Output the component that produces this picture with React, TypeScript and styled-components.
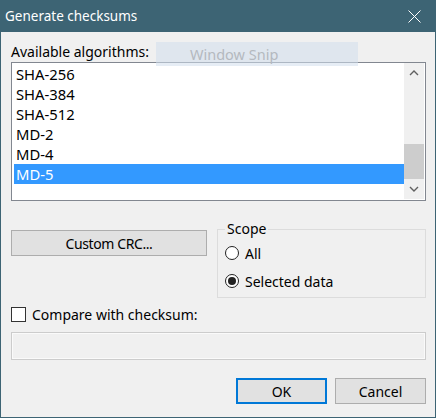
import React from "react";
import styled, { createGlobalStyle } from "styled-components";

const Global = createGlobalStyle`
  html, body { margin: 0; padding: 0; background: #f0f0f0; }
  * { box-sizing: border-box; }
`;

const FONT = `"Noto Sans", "Open Sans", sans-serif`;

const Window = styled.div`
  position: relative;
  width: 436px;
  height: 418px;
  border: 1px solid #3d6474;
  border-top: none;
  background: #f0f0f0;
  display: flex;
  flex-direction: column;
  font-family: ${FONT};
  font-size: 14px;
  color: #000;
`;

const TitleBar = styled.div`
  height: 32px;
  margin: 0 -1px;
  background: #3d6474;
  color: #fff;
  display: flex;
  align-items: center;
  justify-content: space-between;
  padding: 0 15px 0 5px;
`;

const Title = styled.span`
  font-size: 13.5px;
  line-height: 20px;
  margin-top: 0px;
`;

const Body = styled.div`
  flex: 1;
  display: flex;
  flex-direction: column;
  padding: 10px 9px 0 10px;
`;

const Label = styled.div`
  height: 20px;
  line-height: 20px;
  white-space: nowrap;
`;

const ListBox = styled.div`
  height: 139px;
  border: 1px solid #828790;
  background: #fff;
  display: flex;
  padding: 0 1px 1px 1px;
`;

const Items = styled.div`
  flex: 1;
  display: flex;
  flex-direction: column;
  padding: 1px 0 0 1px;
  font-size: 14.8px;
`;

const Item = styled.div<{ $selected?: boolean }>`
  height: 20px;
  line-height: 21px;
  padding-left: 2px;
  background: ${(p) => (p.$selected ? "#3399ff" : "transparent")};
  color: ${(p) => (p.$selected ? "#fff" : "#000")};
`;

const ScrollBar = styled.div`
  width: 20px;
  background: #f0f0f0;
  display: flex;
  flex-direction: column;
`;

const ScrollButton = styled.div`
  height: 20px;
  display: flex;
  align-items: center;
  justify-content: center;
`;

const Track = styled.div`
  flex: 1;
  display: flex;
  flex-direction: column;
  justify-content: flex-end;
`;

const Thumb = styled.div`
  height: 35px;
  background: #cdcdcd;
`;

const Row = styled.div`
  display: flex;
  align-items: flex-start;
  gap: 10px;
  margin-top: 20px;
`;

const Button = styled.button<{ $default?: boolean; $width: number }>`
  width: ${(p) => p.$width}px;
  height: 26px;
  margin: 0;
  padding: 0;
  font-family: ${FONT};
  font-size: 14px;
  color: #000;
  background: #e1e1e1;
  border: ${(p) => (p.$default ? "2px solid #0078d7" : "1px solid #adadad")};
  border-radius: 0;
`;

const CrcButton = styled(Button)`
  margin-top: 9px;
  letter-spacing: -0.4px;
`;

const Group = styled.fieldset`
  flex: 1;
  margin: 0;
  border: 1px solid #dcdcdc;
  padding: 0 8px 2px 7px;
  min-width: 0;
`;

const Legend = styled.legend`
  padding: 0 2px;
  line-height: 16px;
  height: 16px;
`;

const RadioList = styled.div`
  margin-top: 2px;
  display: flex;
  flex-direction: column;
`;

const RadioRow = styled.label`
  height: 28px;
  display: flex;
  align-items: center;
  gap: 6px;
`;

const RadioCircle = styled.span<{ $checked?: boolean }>`
  width: 14px;
  height: 14px;
  border-radius: 50%;
  border: 1px solid #222;
  background: #fff;
  display: flex;
  align-items: center;
  justify-content: center;
  &::after {
    content: "";
    width: 8px;
    height: 8px;
    border-radius: 50%;
    background: ${(p) => (p.$checked ? "#222" : "transparent")};
  }
`;

const CheckRow = styled.label`
  margin-top: 6px;
  height: 20px;
  display: flex;
  align-items: center;
  gap: 6px;
`;

const CheckBox = styled.span`
  width: 15px;
  height: 15px;
  border: 1px solid #333;
  background: #fff;
`;

const TextField = styled.div`
  margin-top: 8px;
  height: 28px;
  border: 1px solid #cccccc;
  background: #f0f0f0;
  box-shadow: inset 0 0 0 1px #fafafa;
`;

const Footer = styled.div`
  margin-top: 18px;
  display: flex;
  justify-content: flex-end;
  gap: 8px;
`;

const Snip = styled.div`
  position: absolute;
  left: 155px;
  top: 42px;
  width: 202px;
  height: 24px;
  background: rgba(210, 222, 236, 0.55);
  color: #b4b9bf;
  font-size: 14.5px;
  line-height: 24px;
  padding-left: 34px;
  white-space: nowrap;
`;

const Chevron = ({ down }: { down?: boolean }) => (
  <svg width="10" height="6" viewBox="0 0 10 6">
    <polyline
      points={down ? "1,1 5,5 9,1" : "1,5 5,1 9,5"}
      fill="none"
      stroke="#606060"
      strokeWidth="1.4"
    />
  </svg>
);

const CloseIcon = () => (
  <svg width="13" height="13" viewBox="0 0 13 13">
    <path d="M0.5 0.5 L12.5 12.5 M12.5 0.5 L0.5 12.5" stroke="#fff" strokeWidth="1" />
  </svg>
);

const algorithms = ["SHA-256", "SHA-384", "SHA-512", "MD-2", "MD-4", "MD-5"];

export default function App() {
  return (
    <>
      <Global />
      <Window>
        <TitleBar>
          <Title>Generate checksums</Title>
          <CloseIcon />
        </TitleBar>
        <Body>
          <Label>Available algorithms:</Label>
          <ListBox>
            <Items>
              {algorithms.map((a) => (
                <Item key={a} $selected={a === "MD-5"}>
                  {a}
                </Item>
              ))}
            </Items>
            <ScrollBar>
              <ScrollButton>
                <Chevron />
              </ScrollButton>
              <Track>
                <Thumb />
              </Track>
              <ScrollButton>
                <Chevron down />
              </ScrollButton>
            </ScrollBar>
          </ListBox>
          <Row>
            <CrcButton $width={196}>Custom CRC...</CrcButton>
            <Group>
              <Legend>Scope</Legend>
              <RadioList>
                <RadioRow>
                  <RadioCircle />
                  All
                </RadioRow>
                <RadioRow>
                  <RadioCircle $checked />
                  Selected data
                </RadioRow>
              </RadioList>
            </Group>
          </Row>
          <CheckRow>
            <CheckBox />
            Compare with checksum:
          </CheckRow>
          <TextField />
          <Footer>
            <Button $default $width={91}>OK</Button>
            <Button $width={91}>Cancel</Button>
          </Footer>
        </Body>
        <Snip>Window Snip</Snip>
      </Window>
    </>
  );
}
